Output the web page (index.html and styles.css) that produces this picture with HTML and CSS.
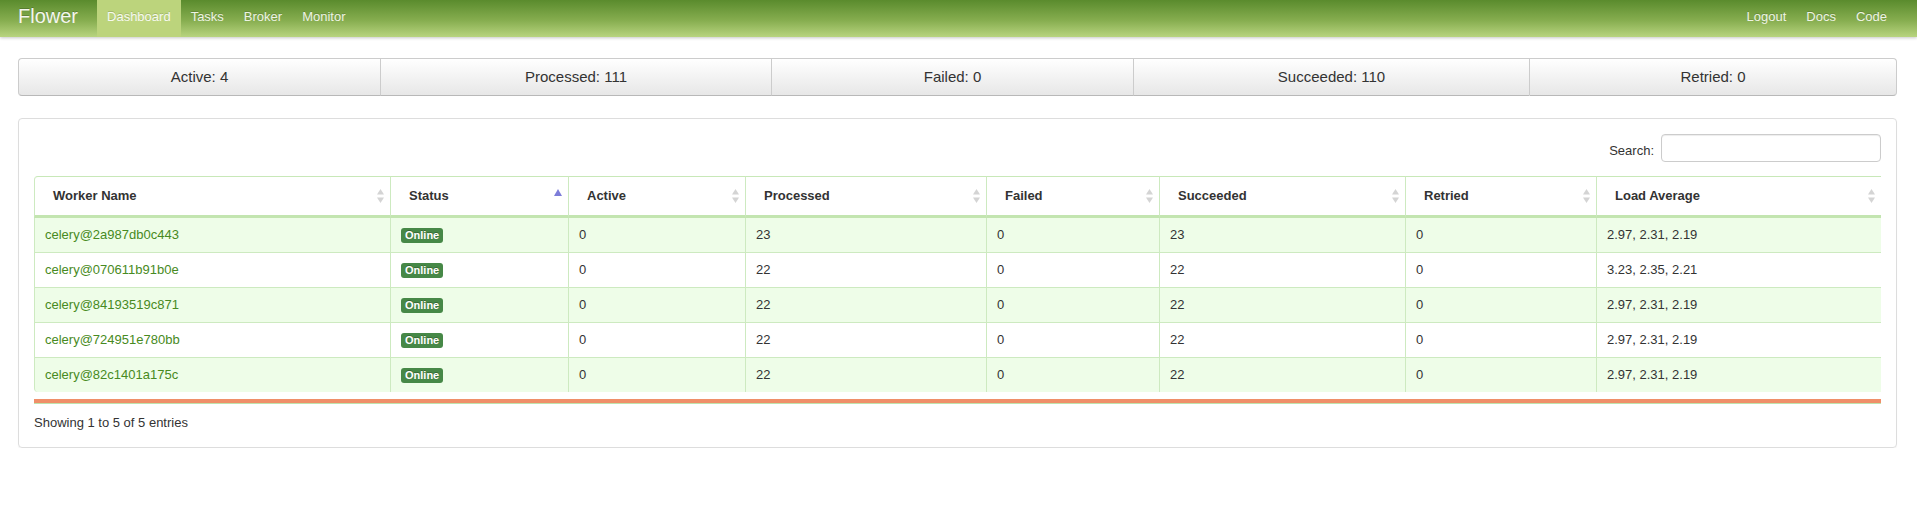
FILE: index.html
```html
<!DOCTYPE html>
<html lang="en">
<head>
<meta charset="utf-8">
<title>Flower</title>
<link rel="stylesheet" href="styles.css">
</head>
<body>
<header class="navbar">
  <a class="brand" href="#">Flower</a>
  <nav class="nav">
    <a class="nav-link active" href="#">Dashboard</a>
    <a class="nav-link" href="#">Tasks</a>
    <a class="nav-link" href="#">Broker</a>
    <a class="nav-link" href="#">Monitor</a>
  </nav>
  <nav class="nav nav-right">
    <a class="nav-link" href="#">Logout</a>
    <a class="nav-link" href="#">Docs</a>
    <a class="nav-link" href="#">Code</a>
  </nav>
</header>

<main class="page">
  <div class="stats">
    <div class="stat">Active: 4</div>
    <div class="stat">Processed: 111</div>
    <div class="stat">Failed: 0</div>
    <div class="stat">Succeeded: 110</div>
    <div class="stat">Retried: 0</div>
  </div>

  <section class="panel">
    <div class="search-row">
      <label class="search-label" for="search">Search:</label>
      <input class="search-input" id="search" type="search">
    </div>

    <table class="workers">
      <colgroup>
        <col class="c-name"><col class="c-status"><col class="c-active"><col class="c-processed">
        <col class="c-failed"><col class="c-succeeded"><col class="c-retried"><col class="c-load">
      </colgroup>
      <thead>
        <tr>
          <th>Worker Name<span class="sort"><svg width="7" height="14" viewBox="0 0 7 14"><path d="M3.5 0L7 5.5H0z"/><path d="M0 8.5h7L3.5 14z"/></svg></span></th>
          <th>Status<span class="sort sort-asc"><svg width="8" height="14" viewBox="0 0 8 14"><path d="M4 0L8 7H0z"/></svg></span></th>
          <th>Active<span class="sort"><svg width="7" height="14" viewBox="0 0 7 14"><path d="M3.5 0L7 5.5H0z"/><path d="M0 8.5h7L3.5 14z"/></svg></span></th>
          <th>Processed<span class="sort"><svg width="7" height="14" viewBox="0 0 7 14"><path d="M3.5 0L7 5.5H0z"/><path d="M0 8.5h7L3.5 14z"/></svg></span></th>
          <th>Failed<span class="sort"><svg width="7" height="14" viewBox="0 0 7 14"><path d="M3.5 0L7 5.5H0z"/><path d="M0 8.5h7L3.5 14z"/></svg></span></th>
          <th>Succeeded<span class="sort"><svg width="7" height="14" viewBox="0 0 7 14"><path d="M3.5 0L7 5.5H0z"/><path d="M0 8.5h7L3.5 14z"/></svg></span></th>
          <th>Retried<span class="sort"><svg width="7" height="14" viewBox="0 0 7 14"><path d="M3.5 0L7 5.5H0z"/><path d="M0 8.5h7L3.5 14z"/></svg></span></th>
          <th>Load Average<span class="sort"><svg width="7" height="14" viewBox="0 0 7 14"><path d="M3.5 0L7 5.5H0z"/><path d="M0 8.5h7L3.5 14z"/></svg></span></th>
        </tr>
      </thead>
      <tbody>
        <tr>
          <td><a class="worker-link" href="#">celery@2a987db0c443</a></td>
          <td><span class="badge">Online</span></td>
          <td>0</td><td>23</td><td>0</td><td>23</td><td>0</td><td>2.97, 2.31, 2.19</td>
        </tr>
        <tr>
          <td><a class="worker-link" href="#">celery@070611b91b0e</a></td>
          <td><span class="badge">Online</span></td>
          <td>0</td><td>22</td><td>0</td><td>22</td><td>0</td><td>3.23, 2.35, 2.21</td>
        </tr>
        <tr>
          <td><a class="worker-link" href="#">celery@84193519c871</a></td>
          <td><span class="badge">Online</span></td>
          <td>0</td><td>22</td><td>0</td><td>22</td><td>0</td><td>2.97, 2.31, 2.19</td>
        </tr>
        <tr>
          <td><a class="worker-link" href="#">celery@724951e780bb</a></td>
          <td><span class="badge">Online</span></td>
          <td>0</td><td>22</td><td>0</td><td>22</td><td>0</td><td>2.97, 2.31, 2.19</td>
        </tr>
        <tr>
          <td><a class="worker-link" href="#">celery@82c1401a175c</a></td>
          <td><span class="badge">Online</span></td>
          <td>0</td><td>22</td><td>0</td><td>22</td><td>0</td><td>2.97, 2.31, 2.19</td>
        </tr>
      </tbody>
    </table>
    <div class="table-bar"></div>
    <div class="info">Showing 1 to 5 of 5 entries</div>
  </section>
</main>
</body>
</html>
```

FILE: styles.css
```css
* { box-sizing: border-box; }

html, body {
  margin: 0;
  padding: 0;
  background: #fff;
}

body {
  font-family: "Liberation Sans", Arial, sans-serif;
  font-size: 13px;
  line-height: 18px;
  color: #333;
}

a { text-decoration: none; }

/* ---------- navbar ---------- */
.navbar {
  display: flex;
  align-items: stretch;
  height: 37px;
  padding: 0 20px 0 0;
  background: linear-gradient(to bottom, #5a8b2d 0%, #86ad4f 55%, #b8d47f 100%);
  box-shadow: 0 1px 3px rgba(0, 0, 0, 0.22);
}

.brand {
  padding: 0 19px 4px 18px;
  font-size: 20px;
  line-height: 33px;
  color: #f4f6ee;
  text-shadow: 0 -1px 0 rgba(0, 0, 0, 0.2);
}

.nav {
  display: flex;
}

.nav-right {
  margin-left: auto;
}

.nav-link {
  padding: 0 10px 4px;
  font-size: 13px;
  line-height: 33px;
  color: #eef3e4;
  text-shadow: 0 -1px 0 rgba(0, 0, 0, 0.15);
}

.nav-link.active {
  background: #bcd47c;
  color: #f7f9f0;
}

/* ---------- page ---------- */
.page {
  padding: 21px 20px 0 18px;
}

.stats {
  display: grid;
  grid-template-columns: 362fr 391fr 362fr 396fr 368fr;
}

.stat {
  padding: 8px 12px;
  font-size: 15px;
  line-height: 20px;
  text-align: center;
  color: #333;
  background: linear-gradient(to bottom, #ffffff, #e7e7e7);
  border: 1px solid #cccccc;
  border-right: none;
  border-bottom-color: #b8b8b8;
  box-shadow: inset 0 1px 0 rgba(255, 255, 255, 0.6);
}

.stat:first-child { border-radius: 4px 0 0 4px; }
.stat:last-child { border-right: 1px solid #cccccc; border-radius: 0 4px 4px 0; }

/* ---------- panel ---------- */
.panel {
  margin-top: 22px;
  padding: 15px;
  border: 1px solid #dddddd;
  border-radius: 4px;
  box-shadow: 0 1px 1px rgba(0, 0, 0, 0.05);
}

.search-row {
  display: flex;
  justify-content: flex-end;
  align-items: center;
  margin-bottom: 14px;
}

.search-label {
  margin: 6px 7px 0 0;
  color: #333;
}

.search-input {
  width: 220px;
  height: 28px;
  margin: 0;
  padding: 4px 6px;
  border: 1px solid #cccccc;
  border-radius: 4px;
  font: inherit;
  box-shadow: inset 0 1px 1px rgba(0, 0, 0, 0.075);
}

/* ---------- table ---------- */
.workers {
  width: 100%;
  table-layout: fixed;
  border-collapse: separate;
  border-spacing: 0;
}

.c-name { width: 356px; }
.c-status { width: 178px; }
.c-active { width: 177px; }
.c-processed { width: 241px; }
.c-failed { width: 173px; }
.c-succeeded { width: 246px; }
.c-retried { width: 191px; }
.c-load { width: 285px; }

.workers th {
  position: relative;
  padding: 10px 18px;
  text-align: left;
  font-weight: bold;
  color: #333;
  background: #fff;
  border-top: 1px solid #c8e8b8;
  border-left: 1px solid #cdeac0;
  border-bottom: 3px solid #c3e5b0;
}

.workers th:first-child { border-top-left-radius: 4px; }

.workers td {
  padding: 8px 10px;
  color: #333;
  border-left: 1px solid #cdeac0;
  border-bottom: 1px solid #cdeac0;
}

.workers tbody tr:nth-child(odd) td { background: #eefde8; }
.workers tbody tr:last-child td { border-bottom: none; }
.workers tbody tr:last-child td:first-child { border-bottom-left-radius: 4px; }

.sort {
  position: absolute;
  right: 6px;
  top: 50%;
  transform: translateY(-50%);
  display: flex;
  fill: #d4d4d4;
}

.sort svg { display: block; }

.sort-asc { fill: #7d7dd9; }

.worker-link { color: #478a22; }

.badge {
  display: inline-block;
  padding: 1px 4px;
  font-size: 11px;
  font-weight: bold;
  line-height: 13px;
  color: #fff;
  background: #468847;
  border-radius: 3px;
  text-shadow: 0 -1px 0 rgba(0, 0, 0, 0.25);
  vertical-align: 0;
}

.table-bar {
  margin-top: 7px;
  height: 5px;
  background: #ef8f69;
  border-bottom: 1px solid #bfe3ad;
}

.info {
  padding-top: 10px;
  color: #333;
}
```
